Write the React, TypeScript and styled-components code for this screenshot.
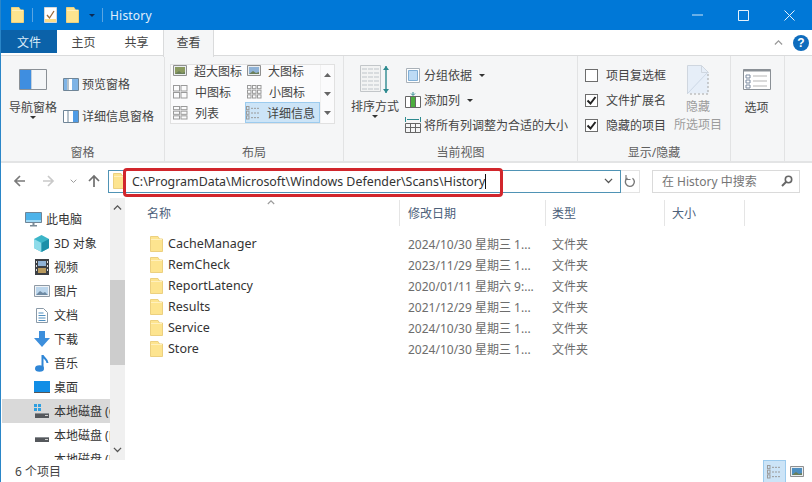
import React from 'react';
import styled, { createGlobalStyle } from 'styled-components';

const Global = createGlobalStyle`
  html, body { margin: 0; padding: 0; background: #fff; }
  #root { width: 812px; height: 482px; overflow: hidden; }
  * { box-sizing: border-box; }
`;

const UI = `"Noto Sans", "Noto Sans CJK SC", sans-serif`;

const Win = styled.div`
  position: relative;
  width: 812px; height: 482px; display: flex; flex-direction: column;
  border-left: 1px solid #2a86c8; background: #fff; overflow: hidden;
  font-family: ${UI}; font-size: 12px; color: #3a3a3a;
`;
const TitleBar = styled.div`
  height: 30px; background: #0078d7; display: flex; align-items: center; flex: none;
`;
const QuickTools = styled.div`
  display: flex; align-items: center; padding-left: 10px; gap: 0;
`;
const QuickSlot = styled.div<{ $w: number }>`
  width: ${p => p.$w}px; display: flex; align-items: center;
`;
const TitleSep = styled.div`width: 1px; height: 14px; background: #5aa5e2;`;
const Title = styled.div`
  color: #e2f0fb; font-size: 12px; margin-left: 7px; flex: 1; letter-spacing: .2px;
`;
const WinButtons = styled.div`display: flex; align-items: center; padding-right: 0;`;
const WinButton = styled.div`
  width: 46px; height: 30px; display: flex; align-items: center; justify-content: center;
`;
const TabBar = styled.div`
  height: 26px; display: flex; flex: none; align-items: flex-start; background: #fff; position: relative;
  border-bottom: 1px solid #dadbdc;
`;
const FileTab = styled.div`
  width: 56px; height: 23px; background: #0b62a9; color: #dcecf8; display: flex; align-items: center; justify-content: center; font-size: 12px;
`;
const Tab = styled.div<{ $active?: boolean; $w: number }>`
  width: ${p => p.$w}px; height: ${p => (p.$active ? 27 : 23)}px; display: flex; align-items: center; justify-content: center;
  font-size: 12px; color: #444; background: ${p => (p.$active ? '#f5f6f7' : '#fff')};
  ${p => p.$active ? 'border: 1px solid #dadbdc; border-top: 0; border-bottom: 0; padding-bottom: 3px;' : ''}
`;
const TabEnd = styled.div`
  margin-left: auto; display: flex; align-items: center; height: 26px; gap: 10px; padding-right: 3px;
`;
const Help = styled.div`
  width: 16px; height: 16px; border-radius: 50%; background: #0f6cbd; color: #fff; font: bold 12px "Liberation Sans", sans-serif;
  display: flex; align-items: center; justify-content: center;
`;
const Ribbon = styled.div`
  height: 107px; flex: none; background: #f5f6f7; display: flex; border-bottom: 2px solid #e3e4e5;
`;
const Group = styled.div<{ $w: number }>`
  width: ${p => p.$w}px; flex: none; display: flex; flex-direction: column; padding-top: 2px;
  border-right: 1px solid #e2e3e4;
`;
const GroupBody = styled.div<{ $pl?: number }>`
  flex: 1; display: flex; padding-left: ${p => p.$pl ?? 0}px; min-height: 0;
`;
const GroupLabel = styled.div`
  height: 16px; flex: none; text-align: center; color: #5f5f5f; font-size: 12px; line-height: 16px;
`;
const BigButton = styled.div<{ $w: number; $dim?: boolean }>`
  width: ${p => p.$w}px; flex: none; display: flex; flex-direction: column; align-items: center;
  color: ${p => (p.$dim ? '#9a9a9a' : '#444')}; font-size: 12px; line-height: 18px; white-space: nowrap;
`;
const BigIcon = styled.div<{ $h: number; $top: number; $after: number }>`
  height: ${p => p.$h}px; margin-top: ${p => p.$top}px; margin-bottom: ${p => p.$after}px; display: flex; align-items: flex-end; justify-content: center;
`;
const Caret = styled.div`
  width: 0; height: 0; border-left: 3px solid transparent; border-right: 3px solid transparent; border-top: 3px solid #333;
  flex: none;
`;
const BigCaret = styled(Caret)`margin-top: -1px;`;
const InlineCaret = styled(Caret)`margin-left: 4px;`;
const DarkCaret = styled(Caret)`border-top-color: #0b2a55;`;
const SmallCol = styled.div<{ $top: number; $gap: number; $ml?: number }>`
  display: flex; flex-direction: column; padding-top: ${p => p.$top}px; gap: ${p => p.$gap}px; white-space: nowrap; margin-left: ${p => p.$ml ?? 0}px;
`;
const SmallBtn = styled.div`
  display: flex; align-items: center; height: 20px; gap: 3px; color: #444; font-size: 12px;
`;
const SmallIcon = styled.div`width: 16px; flex: none; display: flex; justify-content: center; align-items: center;`;
const Gallery = styled.div`
  width: 165px; height: 60px; margin: 6px 0 0 5px; border: 1px solid #e1e1e1; background: #fbfbfc;
  display: flex; flex: none; overflow: hidden;
`;
const GalleryGrid = styled.div`
  width: 149px; display: grid; grid-template-columns: 74px 75px; grid-auto-rows: 21px; align-content: end;
`;
const GalleryItem = styled.div<{ $sel?: boolean }>`
  display: flex; align-items: center; gap: 7px; padding-left: 2px; font-size: 12px; color: #444; white-space: nowrap; overflow: hidden;
  ${p => p.$sel ? 'background: #cce4f7; border: 1px solid #9ccbee; padding-left: 0; gap: 6px;' : ''}
`;
const GalleryScroll = styled.div`
  flex: 1; display: flex; flex-direction: column; align-items: center; justify-content: space-around; border-left: 1px solid #f0f0f0;
`;
const CheckCol = styled.div`
  display: flex; flex-direction: column; gap: 5px; padding-top: 7px; white-space: nowrap;
`;
const CheckRow = styled.div`
  height: 20px; display: flex; align-items: center; gap: 8px; font-size: 12px; color: #444;
`;
const Check = styled.div`
  width: 13px; height: 13px; border: 1px solid #6d6d6d; background: #fff; display: flex; align-items: center; justify-content: center;
`;
const HideBtn = styled.div`
  width: 48px; margin-left: 8px; display: flex; flex-direction: column; align-items: center; color: #9c9c9c; line-height: 18px; white-space: nowrap; padding-top: 7px;
`;
const HideLabelTop = styled.div`margin-top: 3px;`;
const HideLabelBottom = styled.div`margin-top: 0;`;

const AddressRow = styled.div`
  height: 35px; flex: none; display: flex; align-items: center; background: #fff; padding-top: 1px;
`;
const NavButtons = styled.div`
  width: 107px; display: flex; align-items: center; flex: none; padding-left: 12px;
`;
const NavSlot = styled.div<{ $w: number; $pl?: number }>`
  width: ${p => p.$w}px; display: flex; justify-content: center; flex: none; padding-left: ${p => p.$pl ?? 0}px;
`;
const AddressBox = styled.div`
  width: 513px; height: 23px; border: 1px solid #4f93b5; display: flex; align-items: center; flex: none; padding-left: 4px; padding-right: 7px;
`;
const AddressText = styled.div`
  margin-left: 6px; font-size: 12.4px; color: #333; flex: 1; white-space: nowrap; display: flex; align-items: center;
`;
const TextCaret = styled.span`display: inline-block; width: 1px; height: 15px; background: #111;`;
const Refresh = styled.div`
  width: 19px; height: 23px; border: 1px solid #e3e3e3; border-left: 0; display: flex; align-items: center; justify-content: center; flex: none;
`;
const SearchBox = styled.div`
  width: 148px; height: 23px; margin-left: 12px; border: 1px solid #dadada; display: flex; align-items: center; justify-content: space-between;
  padding: 0 6px 0 9px; color: #757575; font-size: 12px; flex: none;
`;
const Highlight = styled.div`
  position: absolute; left: 122px; top: 168px; width: 380px; height: 29px; border: 3px solid #d1262c; border-radius: 4px; pointer-events: none;
`;
const Main = styled.div`flex: 1; display: flex; min-height: 0;`;
const Side = styled.div`width: 109px; flex: none; padding-top: 9px; overflow: hidden; display: flex; flex-direction: column;`;
const SideItem = styled.div<{ $sel?: boolean; $root?: boolean }>`
  height: 24px; flex: none; display: flex; align-items: center; padding-left: ${p => (p.$root ? 23 : 31)}px; gap: 4px;
  white-space: nowrap; font-size: 12px; color: #333; background: ${p => (p.$sel ? '#d9d9d9' : 'transparent')};
  margin-left: 1px; overflow: hidden;
`;
const SideIcon = styled.div`width: 17px; flex: none; display: flex; justify-content: center; align-items: center;`;
const SideScroll = styled.div`
  width: 15px; flex: none; background: #f0f0f0; display: flex; flex-direction: column; align-items: center;
`;
const ScrollArrow = styled.div`height: 20px; display: flex; align-items: center; justify-content: center; flex: none;`;
const ScrollTrack = styled.div`flex: 1; width: 100%; padding-top: 62px;`;
const ScrollThumb = styled.div`height: 85px; background: #cdcdcd;`;
const List = styled.div`flex: 1; min-width: 0; display: flex; flex-direction: column; position: relative;`;
const SortMark = styled.div`position: absolute; left: 142px; top: 2px; display: flex;`;
const Header = styled.div`
  height: 27px; margin-top: 2px; padding-bottom: 1px; display: grid; grid-template-columns: 275px 146px 119px 80px; flex: none;
`;
const HeaderCell = styled.div<{ $pl: number }>`
  padding-left: ${p => p.$pl}px; border-right: 1px solid #e5e5e5; color: #4c607a; font-size: 12px; display: flex; align-items: center;
`;
const Rows = styled.div`padding-top: 6px; display: flex; flex-direction: column;`;
const Row = styled.div`
  height: 21px; display: grid; grid-template-columns: 275px 146px 119px; align-items: center; font-size: 12px; white-space: nowrap;
`;
const NameCell = styled.div`display: flex; align-items: center; padding-left: 25px; gap: 5px; color: #333; font-size: 12.5px;`;
const MetaCell = styled.div<{ $pl: number }>`padding-left: ${p => p.$pl}px; color: #6d6d6d;`;
const Status = styled.div`
  height: 22px; flex: none; display: flex; align-items: center; justify-content: space-between; padding-left: 14px; color: #444; font-size: 12px;
`;
const ViewSwitch = styled.div`display: flex; align-items: center; padding-right: 7px; gap: 3px;`;
const ViewBtn = styled.div<{ $on?: boolean }>`
  width: ${p => (p.$on ? 23 : 16)}px; height: 22px; display: flex; align-items: center; justify-content: center;
  ${p => p.$on ? 'background: #cce4f7; border: 1px solid #9ccbee; border-bottom: 0;' : ''}
`;

const FolderIcon = () => (
  <svg width="13" height="16" viewBox="0 0 13 16" style={{ flex: 'none' }}>
    <path d="M.5.5h7.5l1.5 2.5h3v12.5H.5z" fill="#fde48f" stroke="#ecd07f" />
    <path d="M1 3.5h11" stroke="#fff0bd" />
  </svg>
);
const DocCheck = () => (
  <svg width="13" height="16" viewBox="0 0 13 16">
    <path d="M.5.5h12v15H.5z" fill="#fff" stroke="#d8d8d8" />
    <path d="M3 8l2.5 3L10 4" fill="none" stroke="#9a6a3a" strokeWidth="1.3" />
    <path d="M1 12h11v3H1z" fill="#fbdc85" />
  </svg>
);
const NavPane = () => (
  <svg width="28" height="21" viewBox="0 0 28 21">
    <path d="M.5.5h27v20H.5z" fill="#f4f6f8" stroke="#8a9096" />
    <path d="M1 1h11v19H1z" fill="#3f8ee0" />
    <path d="M12.5 1v19" stroke="#c3d0dc" />
  </svg>
);
const PreviewPane = ({ details }: { details?: boolean }) => (
  <svg width="16" height="13" viewBox="0 0 16 13">
    <path d="M.5.5h15v12H.5z" fill="#fff" stroke="#6f8597" />
    {details
      ? <path d="M10 1h5v11h-5z" fill="#4f9ce6" />
      : <path d="M1 1h3v11H1zM9 1h6v11H9z" fill="#7fb4e6" />}
    <path d="M5 1v11" stroke="#6f8597" />
  </svg>
);
const Thumb = ({ tone }: { tone: string }) => (
  <svg width="14" height="11" viewBox="0 0 14 11" style={{ flex: 'none' }}>
    <path d="M.5.5h13v10H.5z" fill="#e9edf0" stroke="#8f8f8f" />
    <path d="M2 2h10v7H2z" fill={tone} />
    <path d="M2 9l4-3 3 2 3-1v2z" fill="#6b7f5a" />
  </svg>
);
const Dots = ({ cols, rows, lines }: { cols: number; rows: number; lines?: boolean }) => (
  <svg width="15" height="14" viewBox="0 0 15 14" style={{ flex: 'none' }}>
    {Array.from({ length: rows }).flatMap((_, r) =>
      Array.from({ length: cols }).map((__, c) => {
        const w = 15 / cols, h = 14 / rows;
        return (
          <g key={`${r}-${c}`}>
            <rect x={c * w + .5} y={r * h + .5} width={lines ? 2.5 : w - 1.5} height={h - 1.5} fill="none" stroke="#9a9a9a" />
            {lines && <path d={`M${c * w + 5} ${r * h + h / 2}h${w - 6}`} stroke="#9a9a9a" strokeDasharray="2 1" />}
          </g>
        );
      })
    )}
  </svg>
);
const SortIcon = () => (
  <svg width="31" height="30" viewBox="0 0 31 30">
    <path d="M.5.5h20v26H.5z" fill="#f2f3f3" stroke="#c2c6c9" />
    {[4, 8, 12, 16, 20, 24].map(y => <path key={y} d={`M2 ${y}h17`} stroke="#bfc5ca" strokeDasharray="5 1" />)}
    <path d="M26 1v27" stroke="#2d8a8f" strokeWidth="1.4" />
    <path d="M23 5l3-4 3 4zM23 24l3 4 3-4z" fill="#2d8a8f" />
  </svg>
);
const GroupByIcon = () => (
  <svg width="14" height="15" viewBox="0 0 14 15">
    <path d="M.5.5h13v14H.5z" fill="#fff" stroke="#a9b1b8" />
    <path d="M2.5 2.5h9v10h-9z" fill="#bddbf5" stroke="#7faed6" />
  </svg>
);
const AddColIcon = () => (
  <svg width="16" height="16" viewBox="0 0 16 16">
    <path d="M.5 4.5h15v11H.5z" fill="#fff" stroke="#666" />
    <path d="M5.5 4v12M10.5 4v12" stroke="#666" />
    <path d="M6 5h4v10H6z" fill="#4cae3f" />
    <path d="M8 0v3M6 1.5l2 2 2-2" stroke="#2d8a8f" fill="none" />
  </svg>
);
const FitIcon = () => (
  <svg width="16" height="16" viewBox="0 0 16 16">
    <path d="M.5 0v5M15.5 0v5M2 2.5h12" stroke="#2d8a8f" />
    <path d="M.5 6.5h15v9H.5zM.5 10.5h15M5.5 6.5v9M10.5 6.5v9" fill="none" stroke="#666" />
  </svg>
);
const HideIcon = () => (
  <svg width="22" height="30" viewBox="0 0 22 30">
    <path d="M.5.5h14l7 7v21H.5z" fill="#e6eef8" />
    <path d="M21 9v20H1" fill="none" stroke="#a5a5a5" strokeDasharray="2 2" />
    <path d="M.5 29V.5h14l7 7h-7v-7" fill="none" stroke="#cfd6df" />
    <path d="M1 28L20 8" stroke="#cdd8e6" />
  </svg>
);
const OptionsIcon = () => (
  <svg width="28" height="21" viewBox="0 0 28 21">
    <path d="M.5.5h27v20H.5z" fill="#fff" stroke="#8a9096" />
    <path d="M.5.5h27v2H.5z" fill="#8a9096" />
    {[6, 11, 16].map(y => (
      <g key={y}>
        <path d={`M3 ${y}h4v3H3z`} fill="#fff" stroke="#7a8aa0" />
        <path d={`M10 ${y + 1}h14`} stroke="#b5b5b5" />
      </g>
    ))}
  </svg>
);
const Tick = () => (
  <svg width="11" height="11" viewBox="0 0 11 11"><path d="M1.5 5.5L4.5 8.5 9.5 2" fill="none" stroke="#222" strokeWidth="2" /></svg>
);
const Chevron = ({ up, c = '#555', w = 9 }: { up?: boolean; c?: string; w?: number }) => (
  <svg width={w} height={w * .6} viewBox="0 0 10 6" style={{ display: 'block', flex: 'none' }}>
    <path d={up ? 'M1 5l4-4 4 4' : 'M1 1l4 4 4-4'} fill="none" stroke={c} strokeWidth="1.4" />
  </svg>
);
const Tri = ({ up }: { up?: boolean }) => (
  <svg width="7" height="4" viewBox="0 0 7 4"><path d={up ? 'M0 4l3.5-4L7 4z' : 'M0 0l3.5 4L7 0z'} fill="#666" /></svg>
);
const Arrow = ({ dir, c }: { dir: 'l' | 'r' | 'u'; c: string }) => {
  const d = dir === 'l' ? 'M12 7H2M7 2L2 7l5 5' : dir === 'r' ? 'M1 7h10M6 2l5 5-5 5' : 'M7 13V2M2 7l5-5 5 5';
  return <svg width="14" height="14" viewBox="0 0 14 14" style={{ flex: 'none' }}><path d={d} fill="none" stroke={c} strokeWidth="1.7" /></svg>;
};

const PcIcon = () => (
  <svg width="17" height="15" viewBox="0 0 17 15">
    <path d="M.5.5h16v10H.5z" fill="#4db3ea" stroke="#6f8597" />
    <path d="M1 8h15v2H1z" fill="#9fd9f5" />
    <path d="M5 13h7v1.5H5zM7.5 11h2v2h-2z" fill="#7a8a96" />
  </svg>
);
const CubeIcon = () => (
  <svg width="17" height="17" viewBox="0 0 17 17">
    <path d="M8.5 0L16 4v9l-7.5 4L1 13V4z" fill="#3cb5c8" />
    <path d="M1 4l7.5 4v9L1 13z" fill="#8fdcea" />
    <path d="M16 4L8.5 8v9l7.5-4z" fill="#1d8fa8" />
  </svg>
);
const FilmIcon = () => (
  <svg width="14" height="16" viewBox="0 0 14 16">
    <path d="M0 0h14v16H0z" fill="#3c3f44" />
    <path d="M3 2h8v5H3z" fill="#8fb2d6" />
    <path d="M3 9h8v5H3z" fill="#b99a5e" />
    <path d="M1 2h1v2H1zM1 6h1v2H1zM1 10h1v2H1zM12 2h1v2h-1zM12 6h1v2h-1zM12 10h1v2h-1z" fill="#ddd" />
  </svg>
);
const PicIcon = () => (
  <svg width="16" height="12" viewBox="0 0 16 12">
    <path d="M.5.5h15v11H.5z" fill="#f0f3f6" stroke="#8f9aa5" />
    <path d="M2 2h12v8H2z" fill="#bcd6ec" />
    <path d="M2 10l4-4 3 2 2-1 3 3z" fill="#6e8aa3" />
  </svg>
);
const DocIcon = () => (
  <svg width="12" height="15" viewBox="0 0 12 15">
    <path d="M.5.5h7l4 4v10H.5z" fill="#fff" stroke="#8a9aa8" />
    <path d="M2.5 5h5M2.5 7.5h7M2.5 10h7M2.5 12.5h7" stroke="#4f8fc0" />
  </svg>
);
const DownloadIcon = () => (
  <svg width="16" height="16" viewBox="0 0 16 16"><path d="M5 0h6v7h5l-8 9-8-9h5z" fill="#3d8fdc" /></svg>
);
const NoteIcon = () => (
  <svg width="16" height="17" viewBox="0 0 16 17">
    <ellipse cx="5.5" cy="13.5" rx="4.5" ry="3.2" fill="#2f86d6" />
    <path d="M8.5 13V0c.5 3 5 4 5 8" fill="none" stroke="#2f86d6" strokeWidth="2" />
  </svg>
);
const DesktopIcon = () => (
  <svg width="16" height="12" viewBox="0 0 16 12">
    <path d="M0 0h16v11H0z" fill="#118ee6" /><path d="M0 11h16v1H0z" fill="#555" />
  </svg>
);
const DriveIcon = ({ win }: { win?: boolean }) => (
  <svg width="16" height="15" viewBox="0 0 16 15">
    {win && <path d="M0 0h3v3H0zM4 0h3v3H4zM0 4h3v3H0zM4 4h3v3H4z" fill="#2f9fe0" />}
    <path d="M1 9h14v5H1z" fill="#55585c" />
    <path d="M1 9h14v1H1z" fill="#8c9094" />
    <path d="M11 11h3v1h-3z" fill="#cfcfcf" />
  </svg>
);

const sideItems: [React.ReactNode, string][] = [
  [<CubeIcon />, '3D 对象'], [<FilmIcon />, '视频'], [<PicIcon />, '图片'], [<DocIcon />, '文档'],
  [<DownloadIcon />, '下载'], [<NoteIcon />, '音乐'], [<DesktopIcon />, '桌面'],
];
const rows = [
  ['CacheManager', '2024/10/30 星期三 1...'],
  ['RemCheck', '2023/11/29 星期三 1...'],
  ['ReportLatency', '2020/01/11 星期六 9:...'],
  ['Results', '2021/12/29 星期三 1...'],
  ['Service', '2024/10/30 星期三 1...'],
  ['Store', '2024/10/30 星期三 1...'],
];

export default function App() {
  return (
    <Win>
      <Global />
      <TitleBar>
        <QuickTools>
          <QuickSlot $w={21}><FolderIcon /></QuickSlot>
          <QuickSlot $w={12}><TitleSep /></QuickSlot>
          <QuickSlot $w={22}><DocCheck /></QuickSlot>
          <QuickSlot $w={23}><FolderIcon /></QuickSlot>
          <QuickSlot $w={13}><DarkCaret /></QuickSlot>
          <TitleSep />
        </QuickTools>
        <Title>History</Title>
        <WinButtons>
          <WinButton><svg width="11" height="2"><path d="M0 1h11" stroke="#cfe6f8" /></svg></WinButton>
          <WinButton><svg width="11" height="11"><path d="M.5.5h10v10H.5z" fill="none" stroke="#e6f2fb" /></svg></WinButton>
          <WinButton><svg width="11" height="11"><path d="M.5.5l10 10M10.5.5l-10 10" stroke="#e6f2fb" /></svg></WinButton>
        </WinButtons>
      </TitleBar>
      <TabBar>
        <FileTab>文件</FileTab>
        <Tab $w={53}>主页</Tab>
        <Tab $w={53}>共享</Tab>
        <Tab $w={51} $active>查看</Tab>
        <TabEnd><Chevron up c="#999" w={9} /><Help>?</Help></TabEnd>
      </TabBar>
      <Ribbon>
        <Group $w={164}>
          <GroupBody $pl={2}>
            <BigButton $w={60}>
              <BigIcon $h={21} $top={11} $after={9}><NavPane /></BigIcon>
              <div>导航窗格</div>
              <BigCaret />
            </BigButton>
            <SmallCol $top={16} $gap={12}>
              <SmallBtn><PreviewPane />预览窗格</SmallBtn>
              <SmallBtn><PreviewPane details />详细信息窗格</SmallBtn>
            </SmallCol>
          </GroupBody>
          <GroupLabel>窗格</GroupLabel>
        </Group>
        <Group $w={179}>
          <GroupBody>
            <Gallery>
              <GalleryGrid>
                <GalleryItem><Thumb tone="#8a9a60" />超大图标</GalleryItem>
                <GalleryItem><Thumb tone="#8fb2d6" />大图标</GalleryItem>
                <GalleryItem><Dots cols={2} rows={2} />中图标</GalleryItem>
                <GalleryItem><Dots cols={3} rows={3} />小图标</GalleryItem>
                <GalleryItem><Dots cols={2} rows={3} />列表</GalleryItem>
                <GalleryItem $sel><Dots cols={1} rows={3} lines />详细信息</GalleryItem>
              </GalleryGrid>
              <GalleryScroll><Tri up /><Tri /><Tri /></GalleryScroll>
            </Gallery>
          </GroupBody>
          <GroupLabel>布局</GroupLabel>
        </Group>
        <Group $w={234}>
          <GroupBody $pl={5}>
            <BigButton $w={52}>
              <BigIcon $h={30} $top={7} $after={3}><SortIcon /></BigIcon>
              <div>排序方式</div>
              <BigCaret />
            </BigButton>
            <SmallCol $top={7} $gap={5} $ml={4}>
              <SmallBtn><SmallIcon><GroupByIcon /></SmallIcon>分组依据<InlineCaret /></SmallBtn>
              <SmallBtn><SmallIcon><AddColIcon /></SmallIcon>添加列<InlineCaret /></SmallBtn>
              <SmallBtn><SmallIcon><FitIcon /></SmallIcon>将所有列调整为合适的大小</SmallBtn>
            </SmallCol>
          </GroupBody>
          <GroupLabel>当前视图</GroupLabel>
        </Group>
        <Group $w={153}>
          <GroupBody $pl={7}>
            <CheckCol>
              <CheckRow><Check />项目复选框</CheckRow>
              <CheckRow><Check><Tick /></Check>文件扩展名</CheckRow>
              <CheckRow><Check><Tick /></Check>隐藏的项目</CheckRow>
            </CheckCol>
            <HideBtn>
              <HideIcon />
              <HideLabelTop>隐藏</HideLabelTop>
              <HideLabelBottom>所选项目</HideLabelBottom>
            </HideBtn>
          </GroupBody>
          <GroupLabel>显示/隐藏</GroupLabel>
        </Group>
        <Group $w={54}>
          <GroupBody>
            <BigButton $w={51}>
              <BigIcon $h={21} $top={11} $after={9}><OptionsIcon /></BigIcon>
              <div>选项</div>
            </BigButton>
          </GroupBody>
          <GroupLabel />
        </Group>
      </Ribbon>
      <AddressRow>
        <NavButtons>
          <NavSlot $w={13}><Arrow dir="l" c="#7a7a7a" /></NavSlot>
          <NavSlot $w={31} $pl={14}><Arrow dir="r" c="#c9c9c9" /></NavSlot>
          <NavSlot $w={32}><Chevron c="#9a9a9a" w={7} /></NavSlot>
          <NavSlot $w={10}><Arrow dir="u" c="#6f6f6f" /></NavSlot>
        </NavButtons>
        <AddressBox>
          <FolderIcon />
          <AddressText>C:\ProgramData\Microsoft\Windows Defender\Scans\History<TextCaret /></AddressText>
          <Chevron c="#555" w={9} />
        </AddressBox>
        <Refresh>
          <svg width="12" height="13" viewBox="0 0 12 13">
            <path d="M8.5 3.2A4.5 4.5 0 1 1 3.5 3" fill="none" stroke="#777" strokeWidth="1.4" />
            <path d="M2 0v4.5h4.5" fill="none" stroke="#777" strokeWidth="1.2" />
          </svg>
        </Refresh>
        <SearchBox>
          在 History 中搜索
          <svg width="12" height="12" viewBox="0 0 12 12">
            <circle cx="7.5" cy="4.5" r="3.2" fill="none" stroke="#666" strokeWidth="1.6" />
            <path d="M5 7L1 11" stroke="#666" strokeWidth="2" />
          </svg>
        </SearchBox>
      </AddressRow>
      <Highlight />
      <Main>
        <Side>
          <SideItem $root><SideIcon><PcIcon /></SideIcon>此电脑</SideItem>
          {sideItems.map(([icon, label]) => (
            <SideItem key={label}>
              <SideIcon>{icon}</SideIcon>
              {label}
            </SideItem>
          ))}
          <SideItem $sel><SideIcon><DriveIcon win /></SideIcon>本地磁盘 (C:)</SideItem>
          <SideItem><SideIcon><DriveIcon /></SideIcon>本地磁盘 (D:)</SideItem>
          <SideItem><SideIcon><DriveIcon /></SideIcon>本地磁盘 (E:)</SideItem>
        </Side>
        <SideScroll>
          <ScrollArrow><Chevron up c="#555" w={9} /></ScrollArrow>
          <ScrollTrack><ScrollThumb /></ScrollTrack>
          <ScrollArrow><Chevron c="#555" w={9} /></ScrollArrow>
        </SideScroll>
        <List>
          <SortMark><Chevron up c="#9a9a9a" w={8} /></SortMark>
          <Header>
            <HeaderCell $pl={22}>名称</HeaderCell>
            <HeaderCell $pl={8}>修改日期</HeaderCell>
            <HeaderCell $pl={6}>类型</HeaderCell>
            <HeaderCell $pl={7}>大小</HeaderCell>
          </Header>
          <Rows>
            {rows.map(([name, date]) => (
              <Row key={name}>
                <NameCell><FolderIcon />{name}</NameCell>
                <MetaCell $pl={8}>{date}</MetaCell>
                <MetaCell $pl={6}>文件夹</MetaCell>
              </Row>
            ))}
          </Rows>
        </List>
      </Main>
      <Status>
        6 个项目
        <ViewSwitch>
          <ViewBtn $on><Dots cols={1} rows={3} lines /></ViewBtn>
          <ViewBtn><Thumb tone="#4f8fc0" /></ViewBtn>
        </ViewSwitch>
      </Status>
    </Win>
  );
}
